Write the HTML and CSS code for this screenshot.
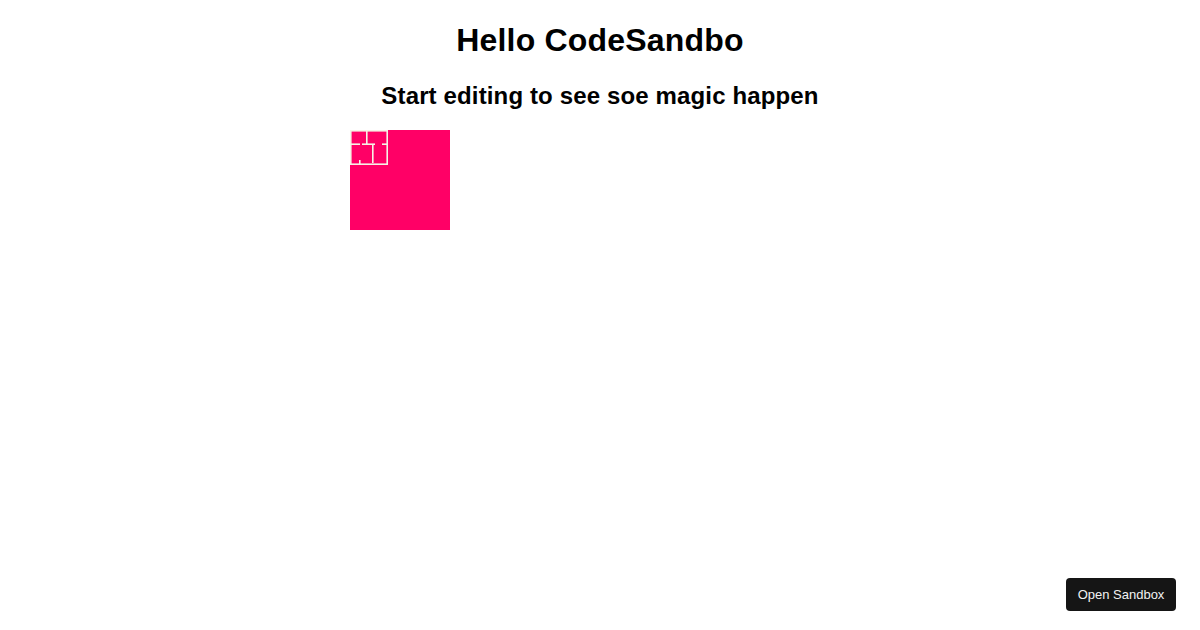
FILE: index.html
```html
<!DOCTYPE html>
<html>
<head>
<meta charset="utf-8">
<link rel="stylesheet" href="styles.css">
</head>
<body>
<div class="app">
  <h1 class="title">Hello CodeSandbo</h1>
  <h2 class="subtitle">Start editing to see soe magic happen</h2>
  <div class="box">
    <svg class="plan" width="38" height="35" viewBox="0 0 38 35">
      <g stroke="#f6f1e6" stroke-width="1.6" fill="none">
        <rect x="0.8" y="0.8" width="36.4" height="33.4"/>
        <line x1="16.8" y1="0" x2="16.8" y2="14"/>
        <line x1="0" y1="14.2" x2="10" y2="14.2"/>
        <line x1="12" y1="14.2" x2="25" y2="14.2"/>
        <line x1="32" y1="14.2" x2="38" y2="14.2"/>
        <line x1="22.8" y1="14" x2="22.8" y2="33"/>
        <line x1="9.8" y1="30" x2="9.8" y2="35"/>
      </g>
    </svg>
  </div>
</div>
<a class="open-btn">Open Sandbox</a>
</body>
</html>
```
FILE: styles.css
```css
html, body {
  background: #ffffff;
}
body {
  margin: 8px;
  font-family: "Liberation Sans", Arial, sans-serif;
}
.app {
  text-align: center;
}
.title {
  font-size: 32px;
  font-weight: bold;
  margin: 13.5px 0 0;
  line-height: 1.149;
  letter-spacing: 0.2px;
  color: #000;
}
.subtitle {
  font-size: 24px;
  font-weight: bold;
  margin: 23.5px 0 20.5px;
  line-height: 1.149;
  letter-spacing: 0.14px;
  color: #000;
}
.box {
  width: 100px;
  height: 100px;
  margin-left: 342px;
  background: #ff0066;
  text-align: left;
}
.plan {
  display: block;
}
.open-btn {
  position: fixed;
  right: 24px;
  bottom: 19px;
  height: 33px;
  width: 110px;
  box-sizing: border-box;
  display: flex;
  align-items: center;
  justify-content: center;
  background: #151515;
  color: #f2f2f2;
  border-radius: 4px;
  font-family: "Liberation Sans", Arial, sans-serif;
  font-size: 13px;
}
```
